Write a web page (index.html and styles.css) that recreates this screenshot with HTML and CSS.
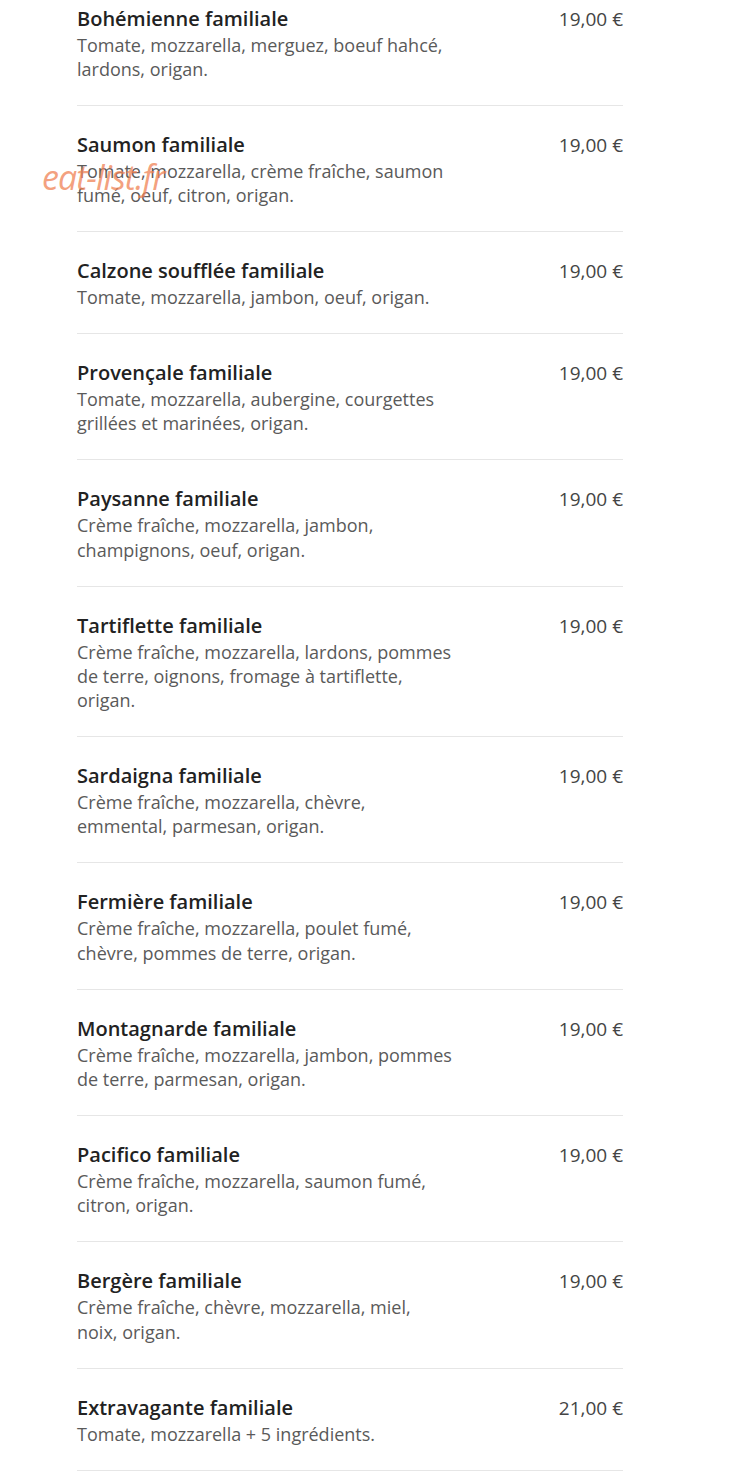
FILE: index.html
```html
<!DOCTYPE html>
<html lang="fr">
<head>
    <meta charset="UTF-8">
    <meta name="viewport" content="width=device-width, initial-scale=1.0">
    <title>Pizzas familiales</title>
    <link rel="stylesheet" href="styles.css">
</head>
<body>
    <div class="menu">
        <div class="item">
            <div class="item-text">
                <div class="item-name">Bohémienne familiale</div>
                <div class="item-desc">Tomate, mozzarella, merguez, boeuf hahcé, lardons, origan.</div>
            </div>
            <div class="item-price">19,00 €</div>
        </div>
        <div class="item">
            <div class="item-text">
                <div class="item-name">Saumon familiale</div>
                <div class="item-desc">Tomate, mozzarella, crème fraîche, saumon fumé, oeuf, citron, origan.</div>
            </div>
            <div class="item-price">19,00 €</div>
            <span class="watermark">eat-list.fr</span>
        </div>
        <div class="item">
            <div class="item-text">
                <div class="item-name">Calzone soufflée familiale</div>
                <div class="item-desc">Tomate, mozzarella, jambon, oeuf, origan.</div>
            </div>
            <div class="item-price">19,00 €</div>
        </div>
        <div class="item">
            <div class="item-text">
                <div class="item-name">Provençale familiale</div>
                <div class="item-desc">Tomate, mozzarella, aubergine, courgettes grillées et marinées, origan.</div>
            </div>
            <div class="item-price">19,00 €</div>
        </div>
        <div class="item">
            <div class="item-text">
                <div class="item-name">Paysanne familiale</div>
                <div class="item-desc">Crème fraîche, mozzarella, jambon, champignons, oeuf, origan.</div>
            </div>
            <div class="item-price">19,00 €</div>
        </div>
        <div class="item">
            <div class="item-text">
                <div class="item-name">Tartiflette familiale</div>
                <div class="item-desc">Crème fraîche, mozzarella, lardons, pommes de terre, oignons, fromage à tartiflette, origan.</div>
            </div>
            <div class="item-price">19,00 €</div>
        </div>
        <div class="item">
            <div class="item-text">
                <div class="item-name">Sardaigna familiale</div>
                <div class="item-desc">Crème fraîche, mozzarella, chèvre,<br>emmental, parmesan, origan.</div>
            </div>
            <div class="item-price">19,00 €</div>
        </div>
        <div class="item">
            <div class="item-text">
                <div class="item-name">Fermière familiale</div>
                <div class="item-desc">Crème fraîche, mozzarella, poulet fumé, chèvre, pommes de terre, origan.</div>
            </div>
            <div class="item-price">19,00 €</div>
        </div>
        <div class="item">
            <div class="item-text">
                <div class="item-name">Montagnarde familiale</div>
                <div class="item-desc">Crème fraîche, mozzarella, jambon, pommes de terre, parmesan, origan.</div>
            </div>
            <div class="item-price">19,00 €</div>
        </div>
        <div class="item">
            <div class="item-text">
                <div class="item-name">Pacifico familiale</div>
                <div class="item-desc">Crème fraîche, mozzarella, saumon fumé, citron, origan.</div>
            </div>
            <div class="item-price">19,00 €</div>
        </div>
        <div class="item">
            <div class="item-text">
                <div class="item-name">Bergère familiale</div>
                <div class="item-desc">Crème fraîche, chèvre, mozzarella, miel,<br>noix, origan.</div>
            </div>
            <div class="item-price">19,00 €</div>
        </div>
        <div class="item">
            <div class="item-text">
                <div class="item-name">Extravagante familiale</div>
                <div class="item-desc">Tomate, mozzarella + 5 ingrédients.</div>
            </div>
            <div class="item-price">21,00 €</div>
        </div>
    </div>
</body>
</html>
```

FILE: styles.css
```css
body {
    font-family: "Open Sans", Arial, sans-serif;
    margin: 0;
    padding: 0;
    background-color: #fff;
    color: #555;
}
.menu {
    width: 546px;
    margin: -20.5px 0 0 77px;
}
.item {
    position: relative;
    display: flex;
    justify-content: space-between;
    align-items: flex-start;
    padding: 25px 0 23.7px;
    border-bottom: 1px solid #e6e6e6;
}
.item-text {
    width: 381px;
}
.item-name {
    font-size: 20px;
    font-weight: 600;
    line-height: 28px;
    color: #222;
}
.item-desc {
    font-size: 18px;
    line-height: 24.3px;
    color: #5a5a5a;
}
.item-price {
    font-size: 19px;
    line-height: 28px;
    color: #444;
    white-space: nowrap;
}
.watermark {
    position: absolute;
    left: -35px;
    top: 48px;
    font-size: 34px;
    font-style: italic;
    font-weight: 400;
    color: rgba(240, 130, 85, 0.75);
    letter-spacing: -1px;
}
```
